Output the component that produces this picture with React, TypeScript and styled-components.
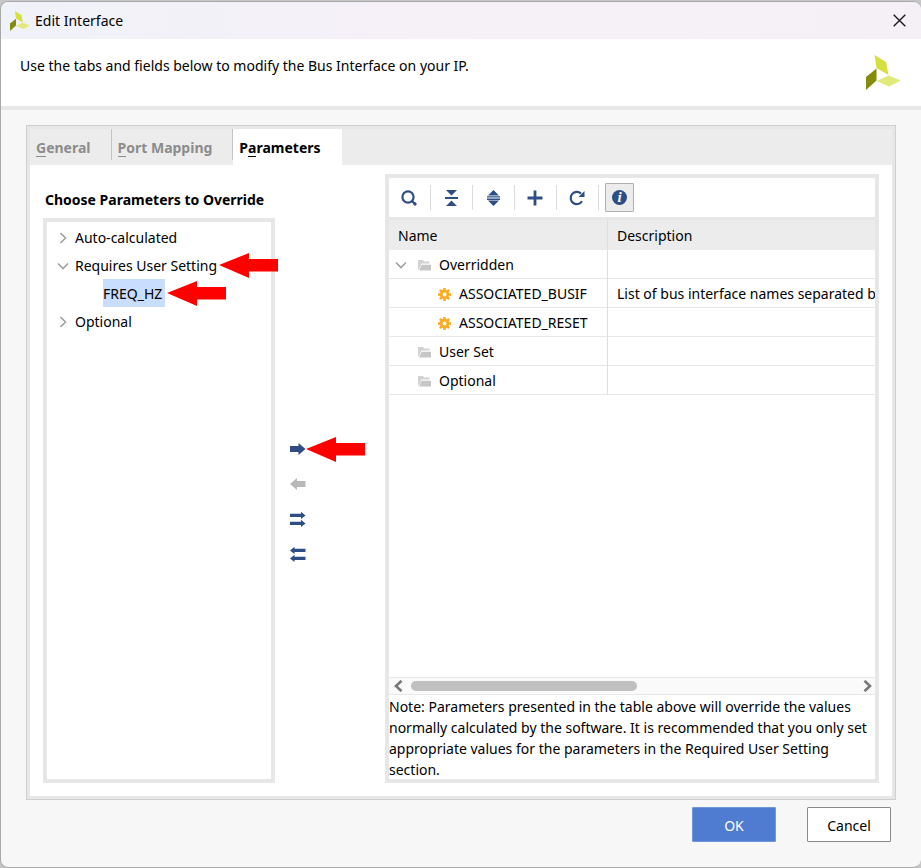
import React from "react";
import styled, { createGlobalStyle, css } from "styled-components";

const navy = "#2f4d85";
const edge = "#e7e7e7";

const GlobalStyle = createGlobalStyle`
  *, *::before, *::after { box-sizing: border-box; }
  html, body { margin: 0; }
  body {
    background: #c6c6c6;
    color: #000;
    font: 14px/20px "Noto Sans", "Open Sans", sans-serif;
  }
  button {
    margin: 0;
    padding: 0;
    border: 0;
    background: none;
    color: inherit;
    font: inherit;
  }
  svg { display: block; flex: none; }
`;

const Page = styled.div`
  display: flex;
  min-height: 100vh;
  padding: 1px 0 0;
`;

const Dialog = styled.main`
  flex: 1;
  min-width: 0;
  display: flex;
  flex-direction: column;
  border: 1px solid #a9a9a9;
  border-right: 0;
  border-radius: 8px;
  background: #f7f7f7;
  overflow: hidden;
`;

const TitleBar = styled.header`
  display: flex;
  align-items: center;
  gap: 5px;
  height: 37px;
  padding: 0 15px 0 9px;
  background: linear-gradient(90deg, #f0f2f9, #f6f0f7 45%, #f5eff6);
`;

const Title = styled.h1`
  flex: 1;
  margin: 0;
  font-size: 14px;
  font-weight: 400;
`;

const Banner = styled.section`
  display: flex;
  align-items: center;
  justify-content: space-between;
  height: 71px;
  padding: 0 20px 0 19px;
  border-bottom: 4px solid ${edge};
  background: #fff;
`;

const BannerText = styled.p`
  margin: 0;
  padding-bottom: 13px;
`;

const Panel = styled.section`
  flex: 1;
  display: flex;
  flex-direction: column;
  margin: 15px 25px 0;
  border: 1px solid #cfcfcf;
  background: #fff;
`;

const PanelFrame = styled.div`
  flex: 1;
  display: flex;
  flex-direction: column;
  border: 3px solid ${edge};
`;

const TabStrip = styled.div`
  display: flex;
  height: 36px;
  background: #ececec;
`;

const Tab = styled.button<{ $active?: boolean }>`
  position: relative;
  padding: 2px 21px 0 6px;
  color: #8c8c8c;
  font-weight: 700;
  ${(p) =>
    p.$active
      ? css`
          background: #fff;
          color: #000;
        `
      : css`
          &::after {
            content: "";
            position: absolute;
            top: 0;
            right: 0;
            width: 1px;
            height: 31px;
            background: #c4c4c4;
          }
        `}
`;

const Mnemonic = styled.span`
  display: inline-block;
  height: 19px;
  line-height: 19px;
  border-bottom: 1px solid currentColor;
`;

const TabBody = styled.div`
  flex: 1;
  display: flex;
  padding: 9px 13px 13px;
`;

const Chooser = styled.section`
  display: flex;
  flex-direction: column;
  flex: 0 0 232px;
`;

const ChooserTitle = styled.h2`
  margin: 0;
  padding: 16px 2px 8px;
  font-size: 14px;
  line-height: 20px;
  font-weight: 700;
`;

const Tree = styled.ul`
  flex: 1;
  margin: 0;
  padding: 1px 0 0 10px;
  border: 4px solid ${edge};
  list-style: none;
`;

const Branch = styled.ul`
  margin: 0;
  padding: 0 0 0 46px;
  list-style: none;
`;

const TreeRow = styled.button`
  display: flex;
  align-items: center;
  gap: 6px;
  height: 28px;
  padding-top: 1px;
  white-space: nowrap;
`;

const Marked = styled.div`
  position: relative;
  width: max-content;
`;

const Leaf = styled.button`
  display: block;
  height: 28px;
  padding: 1px 3px 0 0;
  background: #c9ddff;
`;

const Pointer = styled.span`
  position: absolute;
  z-index: 2;
  top: 2px;
  left: calc(100% + 2px);
`;

const Transfer = styled.div`
  flex: 0 0 110px;
  display: flex;
  flex-direction: column;
  justify-content: center;
  gap: 19px;
  padding: 46px 0 0 15px;
`;

const TransferButton = styled.button`
  position: relative;
  width: 16px;
  height: 16px;
  color: ${navy};
  &:disabled { color: #b8b8b8; }
  ${Pointer} { top: -4px; left: 100%; }
`;

const Result = styled.section`
  flex: 1;
  min-width: 0;
  display: flex;
  flex-direction: column;
  border: 4px solid ${edge};
`;

const Toolbar = styled.div`
  display: flex;
  align-items: center;
  height: 42px;
  border-bottom: 3px solid ${edge};
`;

const Tool = styled.button<{ $pressed?: boolean }>`
  display: grid;
  place-items: center;
  width: ${(p) => (p.$pressed ? "29px" : "42px")};
  height: ${(p) => (p.$pressed ? "29px" : "25px")};
  margin-left: ${(p) => (p.$pressed ? "6px" : "0")};
  padding-right: ${(p) => (p.$pressed ? "0" : "1px")};
  border: solid ${(p) => (p.$pressed ? "#b0b0b0" : "#dcdcdc")};
  border-width: ${(p) => (p.$pressed ? "1px" : "0 1px 0 0")};
  border-radius: ${(p) => (p.$pressed ? "1px" : "0")};
  background: ${(p) => (p.$pressed ? "#ececec" : "none")};
  color: ${navy};
`;

const InfoDisc = styled.span`
  width: 15px;
  height: 15px;
  border-radius: 50%;
  background: ${navy};
  color: #fff;
  font: italic 700 15px/14px "Liberation Serif", serif;
  text-align: center;
`;

const TableArea = styled.div`
  flex: 1;
  overflow: hidden;
`;

const Table = styled.table`
  width: 100%;
  border-collapse: separate;
  border-spacing: 0;
  table-layout: fixed;
  th, td {
    padding: 2px 0 0 9px;
    border-bottom: 1px solid ${edge};
    overflow: hidden;
    text-align: left;
    white-space: nowrap;
    font-weight: 400;
  }
  td { height: 29px; }
  th { height: 30px; background: #ececec; border-bottom-color: #ececec; }
  th:first-child, td:first-child {
    width: 219px;
    border-right: 1px solid #dedede;
  }
`;

const Entry = styled.div<{ $level: number }>`
  display: flex;
  align-items: center;
  gap: 8px;
  padding-left: ${(p) => (p.$level === 2 ? "40px" : "20px")};
`;

const Expander = styled.button`
  width: 12px;
  height: 12px;
  margin: 0 3px 0 -23px;
`;

const ScrollBar = styled.div`
  display: flex;
  align-items: center;
  justify-content: space-between;
  height: 18px;
  padding: 0 3px 0 5px;
  border: solid ${edge};
  border-width: 1px 0;
  background: #fafafa;
`;

const ScrollTrack = styled.div`
  flex: 1;
  margin: 0 8px;
`;

const ScrollThumb = styled.div`
  width: 51%;
  height: 10px;
  border-radius: 5px;
  background: #c0c0c0;
`;

const Note = styled.p`
  margin: 0 0 -1px;
  padding: 1px 0 0;
  line-height: 21px;
`;

const Footer = styled.footer`
  display: flex;
  justify-content: flex-end;
  gap: 31px;
  padding: 7px 30px 25px;
`;

const ActionButton = styled.button<{ $primary?: boolean }>`
  width: 84px;
  height: 35px;
  padding-top: 2px;
  border: 1px solid ${(p) => (p.$primary ? "#6f97dc" : "#8a8a8a")};
  border-radius: 1px;
  background: ${(p) => (p.$primary ? "#4f7bd0" : "#fff")};
  color: ${(p) => (p.$primary ? "#fff" : "#000")};
`;

function Logo({ size }: { size: number }) {
  return (
    <svg width={size} height={size} viewBox="0 0 35 35" aria-hidden="true">
      <path d="M8.5 0 20 7 22.5 20 10.5 13Z" fill="#d6e03c" />
      <path d="M0 22 10.5 13.5V25.5L0 35Z" fill="#858b0b" />
      <path d="M10.5 26 22.5 20.5 35 25.5 23 31.5Z" fill="#e2e97b" />
    </svg>
  );
}

function Chevron({ open }: { open?: boolean }) {
  return (
    <svg width="12" height="12" viewBox="0 0 12 12" fill="none" stroke="#a0a0a0" strokeWidth="1.6" aria-hidden="true">
      <path d={open ? "M1 3.5 6 8.5 11 3.5" : "M3.5 1 8.5 6 3.5 11"} />
    </svg>
  );
}

function RedArrow() {
  return (
    <svg width="59" height="25" viewBox="0 0 59 25" aria-hidden="true">
      <path d="M0 12 30 0V6H59V18.5H30V25Z" fill="#fe0000" />
    </svg>
  );
}

function Folder() {
  return (
    <svg width="13" height="12" viewBox="0 0 13 12" aria-hidden="true">
      <path d="M0 10.5V1H5L6 2.5H11.5V4.5H3.5L1 10.5Z" fill="#d2d2d2" />
      <path d="M3.6 5.8H13V11.5H1.2Z" fill="#c6c6c6" />
    </svg>
  );
}

function Gear() {
  return (
    <svg width="13" height="13" viewBox="-6.5 -6.5 13 13" aria-hidden="true">
      <g fill="#fbab21">
        {[0, 45, 90, 135].map((a) => (
          <rect key={a} x="-1.3" y="-6.5" width="2.6" height="13" transform={`rotate(${a})`} />
        ))}
        <circle r="4.7" />
      </g>
      <circle r="1.9" fill="#fff" />
    </svg>
  );
}

function SearchIcon() {
  return (
    <svg width="16" height="16" viewBox="0 0 16 16" fill="none" stroke="currentColor" aria-hidden="true">
      <circle cx="7" cy="7" r="5.6" strokeWidth="2.2" />
      <path d="m11 11 3 3" strokeWidth="2.2" />
      <circle cx="14" cy="14" r="1.2" fill="currentColor" strokeWidth="1" />
    </svg>
  );
}

function CollapseIcon() {
  return (
    <svg width="13" height="16" viewBox="0 0 13 16" fill="currentColor" aria-hidden="true">
      <path d="M1 0H12L6.5 5.5ZM0 7H13V9H0ZM6.5 10.5 12 16H1Z" />
    </svg>
  );
}

function ExpandIcon() {
  return (
    <svg width="13" height="16" viewBox="0 0 13 16" fill="currentColor" aria-hidden="true">
      <path d="M6.5 0 12 5.5H1ZM0 6.2H13V7.6H0ZM0 8.6H13V10H0ZM1 10.6H12L6.5 16Z" />
    </svg>
  );
}

function PlusIcon() {
  return (
    <svg width="16" height="16" viewBox="0 0 16 16" aria-hidden="true">
      <path d="M8 .5V15.5M.5 8H15.5" stroke="currentColor" strokeWidth="2.8" />
    </svg>
  );
}

function RefreshIcon() {
  return (
    <svg width="16" height="16" viewBox="0 0 16 16" aria-hidden="true">
      <path d="M13 11.2A6.1 6.1 0 1 1 12 3.6" fill="none" stroke="currentColor" strokeWidth="2.2" />
      <path d="M15.5 1V7H9.5Z" fill="currentColor" />
    </svg>
  );
}

function TransferIcon({ left, double }: { left?: boolean; double?: boolean }) {
  return (
    <svg width="16" height="16" viewBox="0 0 16 16" fill="currentColor" aria-hidden="true">
      <g transform={left ? "translate(15.5 0) scale(-1 1)" : undefined}>
        {double ? (
          <path d="M0 2.8H11V.8L15.5 4.4 11 8V6H0ZM0 10.8H11V8.8L15.5 12.4 11 16V14H0Z" />
        ) : (
          <path d="M0 5H8.5V2L15.5 8 8.5 14V11H0Z" />
        )}
      </g>
    </svg>
  );
}

function ScrollArrow({ left }: { left?: boolean }) {
  return (
    <svg width="9" height="12" viewBox="0 0 9 12" fill="none" stroke="#777" strokeWidth="2.6" aria-hidden="true">
      <path d={left ? "M7.5 .8 2 6 7.5 11.2" : "M1.5 .8 7 6 1.5 11.2"} />
    </svg>
  );
}

const rows = [
  { name: "Overridden", level: 1, open: true, description: "" },
  { name: "ASSOCIATED_BUSIF", level: 2, description: "List of bus interface names separated by" },
  { name: "ASSOCIATED_RESET", level: 2, description: "" },
  { name: "User Set", level: 1, description: "" },
  { name: "Optional", level: 1, description: "" },
];

export default function App() {
  return (
    <>
      <GlobalStyle />
      <Page>
        <Dialog role="dialog" aria-labelledby="dialog-title">
          <TitleBar>
            <Logo size={20} />
            <Title id="dialog-title">Edit Interface</Title>
            <button aria-label="Close">
              <svg width="13" height="13" viewBox="0 0 13 13" stroke="#1a1a1a" strokeWidth="1.4">
                <path d="M.7 .7 12.3 12.3M12.3 .7.7 12.3" />
              </svg>
            </button>
          </TitleBar>
          <Banner>
            <BannerText>Use the tabs and fields below to modify the Bus Interface on your IP.</BannerText>
            <Logo size={35} />
          </Banner>
          <Panel>
            <PanelFrame>
              <TabStrip role="tablist">
                <Tab role="tab" aria-selected="false"><Mnemonic>G</Mnemonic>eneral</Tab>
                <Tab role="tab" aria-selected="false"><Mnemonic>P</Mnemonic>ort Mapping</Tab>
                <Tab role="tab" aria-selected="true" $active>P<Mnemonic>a</Mnemonic>rameters</Tab>
              </TabStrip>
              <TabBody role="tabpanel">
                <Chooser>
                  <ChooserTitle>Choose Parameters to Override</ChooserTitle>
                  <Tree>
                    <li><TreeRow><Chevron />Auto-calculated</TreeRow></li>
                    <li>
                      <Marked>
                        <TreeRow aria-expanded="true"><Chevron open />Requires User Setting</TreeRow>
                        <Pointer><RedArrow /></Pointer>
                      </Marked>
                      <Branch>
                        <li>
                          <Marked>
                            <Leaf>FREQ_HZ</Leaf>
                            <Pointer><RedArrow /></Pointer>
                          </Marked>
                        </li>
                      </Branch>
                    </li>
                    <li><TreeRow><Chevron />Optional</TreeRow></li>
                  </Tree>
                </Chooser>
                <Transfer>
                  <TransferButton aria-label="Add selected">
                    <TransferIcon />
                    <Pointer><RedArrow /></Pointer>
                  </TransferButton>
                  <TransferButton aria-label="Remove selected" disabled><TransferIcon left /></TransferButton>
                  <TransferButton aria-label="Add all"><TransferIcon double /></TransferButton>
                  <TransferButton aria-label="Remove all"><TransferIcon left double /></TransferButton>
                </Transfer>
                <Result>
                  <Toolbar role="toolbar">
                    <Tool aria-label="Search"><SearchIcon /></Tool>
                    <Tool aria-label="Collapse all"><CollapseIcon /></Tool>
                    <Tool aria-label="Expand all"><ExpandIcon /></Tool>
                    <Tool aria-label="Add"><PlusIcon /></Tool>
                    <Tool aria-label="Refresh"><RefreshIcon /></Tool>
                    <Tool aria-label="Information" aria-pressed="true" $pressed><InfoDisc>i</InfoDisc></Tool>
                  </Toolbar>
                  <TableArea>
                    <Table>
                      <thead>
                        <tr><th scope="col">Name</th><th scope="col">Description</th></tr>
                      </thead>
                      <tbody>
                        {rows.map((row) => (
                          <tr key={row.name}>
                            <td>
                              <Entry $level={row.level}>
                                {row.open && <Expander aria-label="Collapse"><Chevron open /></Expander>}
                                {row.level === 2 ? <Gear /> : <Folder />}
                                {row.name}
                              </Entry>
                            </td>
                            <td>{row.description}</td>
                          </tr>
                        ))}
                      </tbody>
                    </Table>
                  </TableArea>
                  <ScrollBar>
                    <button aria-label="Scroll left"><ScrollArrow left /></button>
                    <ScrollTrack><ScrollThumb /></ScrollTrack>
                    <button aria-label="Scroll right"><ScrollArrow /></button>
                  </ScrollBar>
                  <Note>
                    Note: Parameters presented in the table above will override the values normally calculated by
                    the software. It is recommended that you only set appropriate values for the parameters in the
                    Required User Setting section.
                  </Note>
                </Result>
              </TabBody>
            </PanelFrame>
          </Panel>
          <Footer>
            <ActionButton $primary>OK</ActionButton>
            <ActionButton>Cancel</ActionButton>
          </Footer>
        </Dialog>
      </Page>
    </>
  );
}
